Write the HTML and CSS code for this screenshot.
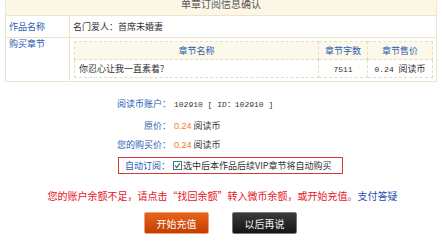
FILE: index.html
```html
<!DOCTYPE html>
<html lang="zh-CN">
<head>
    <meta charset="UTF-8">
    <title>单章订阅信息确认</title>
    <link rel="stylesheet" href="styles.css">
</head>
<body>

    <div class="box">
        <div class="title">单章订阅信息确认</div>
        <table class="info-table">
            <tr>
                <td class="label">作品名称</td>
                <td class="value">名门爱人：首席未婚妻</td>
            </tr>
            <tr>
                <td class="label top">购买章节</td>
                <td class="value inner-cell">
                    <table class="chapter-table">
                        <thead>
                            <tr>
                                <th class="col-name">章节名称</th>
                                <th class="col-words">章节字数</th>
                                <th class="col-price">章节售价</th>
                            </tr>
                        </thead>
                        <tbody>
                            <tr>
                                <td class="name">你忍心让我一直素着?</td>
                                <td class="center"><span class="num">7511</span></td>
                                <td class="center"><span class="num">0.24 </span>阅读币</td>
                            </tr>
                        </tbody>
                    </table>
                </td>
            </tr>
        </table>
    </div>

    <div class="pay-info">
        <div class="row first">
            <span class="row-label">阅读币账户：</span>
            <span class="row-value num">102910 [ ID：102910 ]</span>
        </div>
        <div class="row second">
            <span class="row-label">原价：</span>
            <span class="row-value"><em class="price">0.24</em> 阅读币</span>
        </div>
        <div class="row">
            <span class="row-label">您的购买价：</span>
            <span class="row-value"><em class="price">0.24</em> 阅读币</span>
        </div>
        <div class="row auto">
            <span class="row-label">自动订阅：</span>
            <span class="row-value check-wrap">
                <svg class="check" width="9" height="9" viewBox="0 0 9 9">
                    <rect x="0.5" y="0.5" width="8" height="8" fill="#fff" stroke="#4b6f9c"/>
                    <path d="M2 4.5 L3.8 6.4 L7 2.4" fill="none" stroke="#2f9a2f" stroke-width="1.4"/>
                </svg>
                选中后本作品后续VIP章节将自动购买
            </span>
        </div>
    </div>

    <p class="notice">您的账户余额不足，请点击“找回余额”转入微币余额，或开始充值。<a href="#" class="help">支付答疑</a></p>

    <div class="buttons">
        <button class="btn btn-orange">开始充值</button>
        <button class="btn btn-dark">以后再说</button>
    </div>

</body>
</html>
```

FILE: styles.css
```css
body {
    margin: 0;
    padding: 0;
    background-color: #fff;
    font-family: "Noto Sans CJK SC", "DejaVu Sans", sans-serif;
    font-size: 9px;
    color: #333;
}

.box {
    width: 432px;
    margin-left: 5px;
}

.title {
    height: 15px;
    line-height: 7px;
    overflow: hidden;
    text-align: center;
    font-size: 10px;
    color: #555;
    background-color: #fbf6e6;
    border: 1px solid #efe7d2;
    border-top: none;
    border-bottom: none;
}

.info-table {
    width: 100%;
    border-collapse: collapse;
}

.info-table > tbody > tr > td {
    border: 1px solid #ede4cc;
    padding: 0;
}

.label {
    width: 60px;
    height: 21px;
    padding-left: 3px !important;
    color: #2b5db4;
}

.label.top {
    vertical-align: top;
    line-height: 12px;
}

.value {
    padding-left: 3px !important;
}

.inner-cell {
    padding: 3px 3px 3px 4px !important;
}

.chapter-table {
    width: 100%;
    border-collapse: collapse;
}

.chapter-table th, .chapter-table td {
    border: 1px dashed #e6dcc0;
    height: 17px;
    padding: 0;
    font-weight: normal;
}

.chapter-table th {
    background-color: #fdf9ea;
    color: #2b5db4;
    text-align: center;
}

.col-words {
    width: 48px;
}

.col-price {
    width: 64px;
}

.chapter-table td.name {
    padding-left: 4px;
    color: #333;
}

.chapter-table td.center {
    text-align: center;
}

.num {
    font-family: "Liberation Mono", monospace;
    font-size: 8px;
    white-space: pre;
}

.pay-info {
    margin-top: 11px;
    margin-left: 110px;
}

.row {
    display: flex;
    align-items: center;
    height: 19px;
    border: 1px solid transparent;
    box-sizing: border-box;
    white-space: nowrap;
}

.row.first {
    height: 20px;
}

.row.second {
    margin-top: 3px;
}

.row-label {
    width: 60px;
    flex-shrink: 0;
    text-align: right;
    color: #2b5db4;
}

.row-value {
    margin-left: 3px;
}

.price {
    font-style: normal;
    color: #f07c1c;
    font-family: "Liberation Sans", sans-serif;
}

.row.auto {
    width: 225px;
    height: 17px;
    margin-top: 3px;
    margin-left: 8px;
    border-color: #d8383a;
}

.row.auto .row-label {
    width: 51px;
}

.check-wrap {
    display: flex;
    align-items: center;
    gap: 1px;
}

.check {
    display: block;
}

.notice {
    margin: 14px 0 0 0;
    text-align: center;
    font-size: 10px;
    line-height: 15px;
    color: #e8141c;
}

.help {
    color: #1f4fa8;
    text-decoration: none;
}

.buttons {
    display: flex;
    justify-content: center;
    gap: 23px;
    margin-top: 9px;
    padding-right: 4px;
}

.btn {
    width: 65px;
    height: 22px;
    padding: 0;
    font-family: "Noto Sans CJK SC", sans-serif;
    font-size: 10px;
    border-radius: 2px;
    cursor: pointer;
}

.btn-orange {
    color: #fff;
    background: linear-gradient(#e8641c, #c23f02);
    border: 1px solid #f0a070;
}

.btn-dark {
    color: #f2f2f2;
    background: linear-gradient(#3a3a3a, #151515);
    border: 1px solid #777;
}
```
